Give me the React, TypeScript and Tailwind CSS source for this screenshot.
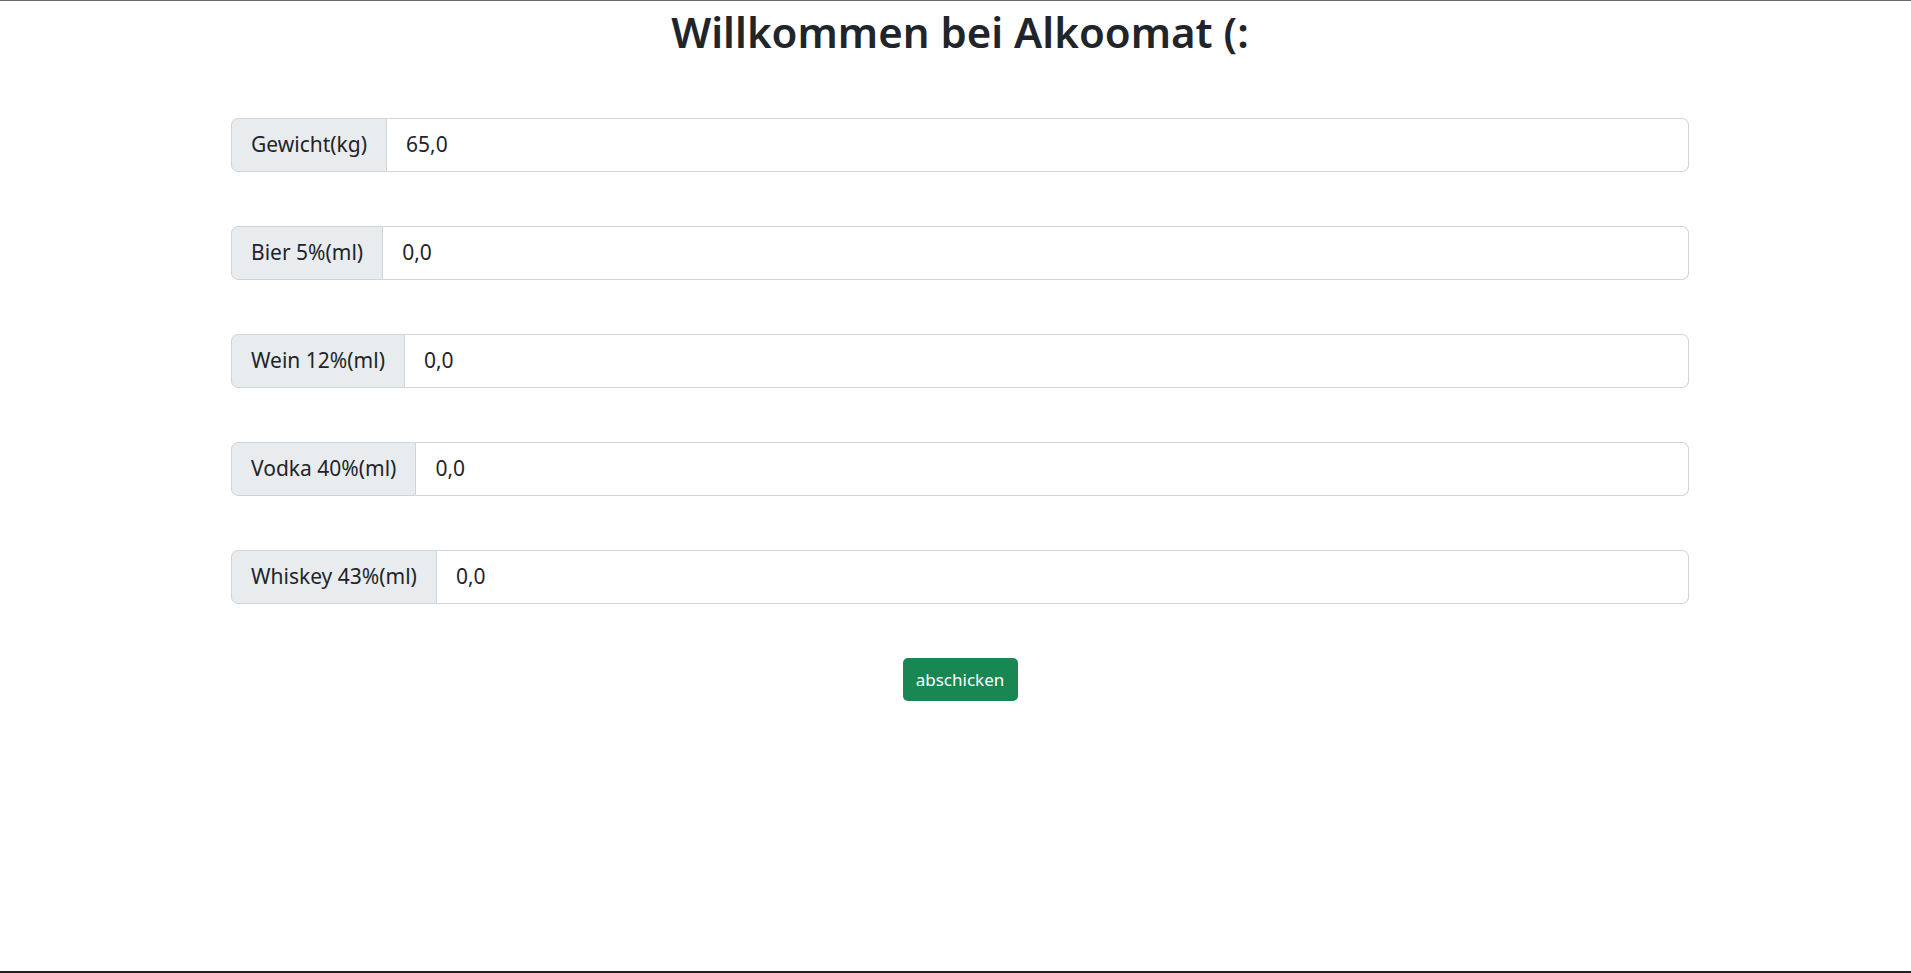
const fields = [
  { label: "Gewicht(kg)", value: "65,0" },
  { label: "Bier 5%(ml)", value: "0,0" },
  { label: "Wein 12%(ml)", value: "0,0" },
  { label: "Vodka 40%(ml)", value: "0,0" },
  { label: "Whiskey 43%(ml)", value: "0,0" },
];

function InputGroup({ label, value }: { label: string; value: string }) {
  return (
    <div className="flex h-[54px] w-full">
      <span className="flex items-center rounded-l-[7px] border border-[#ced4da] bg-[#e9ecef] px-[19px] text-[21px] text-[#212529]">
        {label}
      </span>
      <input
        className="flex-1 rounded-r-[7px] border border-l-0 border-[#ced4da] bg-white px-[19px] text-[21px] text-[#212529] outline-none"
        defaultValue={value}
        type="text"
      />
    </div>
  );
}

export default function App() {
  return (
    <div
      className="flex h-[973px] flex-col items-center border-t border-b-2 border-t-[#6b6b6b] border-b-[#222] bg-white pl-[9px]"
      style={{ fontFamily: '"Noto Sans", "Open Sans", sans-serif' }}
    >
      <h1 className="mt-[3px] text-[42px] font-semibold leading-[56px] text-[#212529]">
        Willkommen bei Alkoomat (:
      </h1>

      <form className="mt-[58px] flex w-[1458px] flex-col gap-[54px]">
        {fields.map((f) => (
          <InputGroup key={f.label} label={f.label} value={f.value} />
        ))}
        <div className="flex justify-center">
          <button
            type="button"
            className="h-[43px] w-[115px] rounded-[5px] bg-[#198754] text-[17px] text-white"
          >
            abschicken
          </button>
        </div>
      </form>
    </div>
  );
}
